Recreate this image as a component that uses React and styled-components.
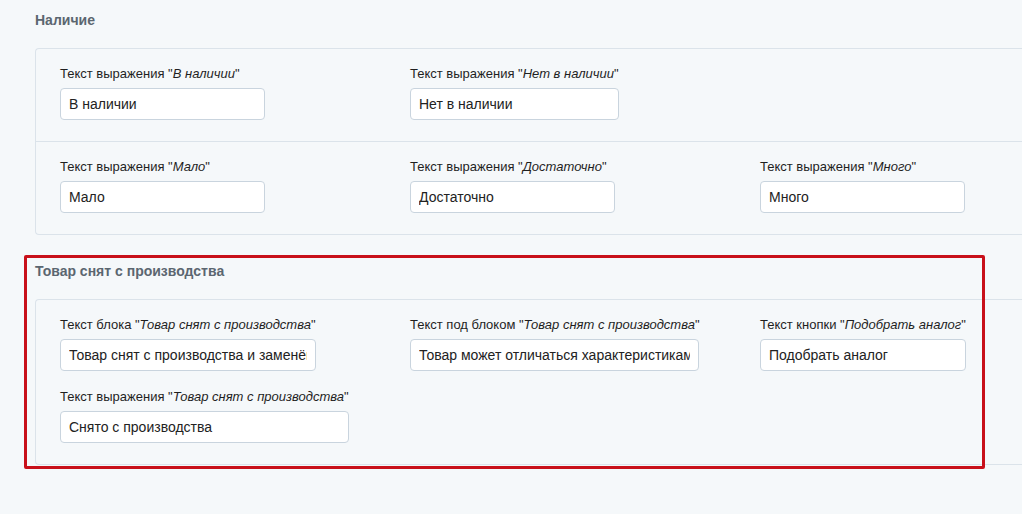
import React from 'react';
import styled, { createGlobalStyle } from 'styled-components';

const GlobalStyle = createGlobalStyle`
  html, body {
    margin: 0;
    padding: 0;
    background: #f5f8fa;
  }
  body {
    font-family: "Liberation Sans", Arial, sans-serif;
    color: #222;
  }
`;

const Page = styled.div`
  width: 1022px;
  height: 514px;
  box-sizing: border-box;
  padding: 10px 0 0 35px;
  overflow: hidden;
  background: #f5f8fa;
`;

const Section = styled.section`
  position: relative;
  margin-top: ${(p) => p.$gap || 0}px;
`;

const Title = styled.h3`
  margin: 0 0 18px;
  font-size: 14px;
  line-height: 20px;
  font-weight: bold;
  color: #5b6670;
`;

const Panel = styled.div`
  border: 1px solid #dbe3ea;
  border-right: none;
  border-radius: 4px 0 0 4px;
`;

const Row = styled.div`
  display: grid;
  grid-template-columns: repeat(3, 350px);
  row-gap: 18px;
  padding: 17px 24px 21px;
  & + & {
    border-top: 1px solid #dbe3ea;
  }
`;

const Field = styled.div`
  display: flex;
  flex-direction: column;
`;

const Label = styled.label`
  font-size: 13px;
  line-height: 16px;
  margin-bottom: 6px;
  color: #1f1f1f;
  white-space: nowrap;
  i {
    font-style: italic;
  }
`;

const Input = styled.input`
  box-sizing: border-box;
  width: ${(p) => p.$w}px;
  height: 32px;
  padding: 0 8px;
  border: 1px solid #c9d4de;
  border-radius: 4px;
  background: #fff;
  font-family: "Liberation Sans", Arial, sans-serif;
  font-size: 14px;
  color: #222;
  outline: none;
`;

// рамка-выделение поверх блока
const Highlight = styled.div`
  position: absolute;
  left: -11px;
  top: -6px;
  width: 961px;
  height: 214px;
  box-sizing: border-box;
  border: 3px solid #c8101a;
  border-radius: 2px;
  pointer-events: none;
`;

const stock = [
  [
    { pre: 'Текст выражения', em: 'В наличии', value: 'В наличии', w: 205 },
    { pre: 'Текст выражения', em: 'Нет в наличии', value: 'Нет в наличии', w: 209 },
  ],
  [
    { pre: 'Текст выражения', em: 'Мало', value: 'Мало', w: 205 },
    { pre: 'Текст выражения', em: 'Достаточно', value: 'Достаточно', w: 205 },
    { pre: 'Текст выражения', em: 'Много', value: 'Много', w: 205 },
  ],
];

const discontinued = [
  { pre: 'Текст блока', em: 'Товар снят с производства', value: 'Товар снят с производства и заменён новой моделью', w: 256 },
  { pre: 'Текст под блоком', em: 'Товар снят с производства', value: 'Товар может отличаться характеристиками', w: 289 },
  { pre: 'Текст кнопки', em: 'Подобрать аналог', value: 'Подобрать аналог', w: 206 },
  { pre: 'Текст выражения', em: 'Товар снят с производства', value: 'Снято с производства', w: 289 },
];

function TextField({ pre, em, value, w }) {
  return (
    <Field>
      <Label>
        {pre} "<i>{em}</i>"
      </Label>
      <Input $w={w} defaultValue={value} />
    </Field>
  );
}

export default function App() {
  return (
    <>
      <GlobalStyle />
      <Page>
        <Section>
          <Title>Наличие</Title>
          <Panel>
            {stock.map((row, i) => (
              <Row key={i}>
                {row.map((f) => (
                  <TextField key={f.em} {...f} />
                ))}
              </Row>
            ))}
          </Panel>
        </Section>

        <Section $gap={26}>
          <Title>Товар снят с производства</Title>
          <Panel>
            <Row>
              {discontinued.map((f) => (
                <TextField key={f.pre + f.value} {...f} />
              ))}
            </Row>
          </Panel>
          <Highlight />
        </Section>
      </Page>
    </>
  );
}
